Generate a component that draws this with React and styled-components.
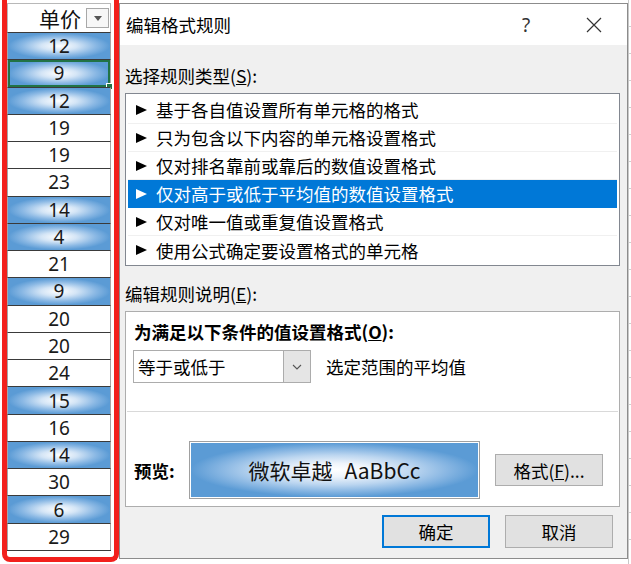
import React from 'react';
import styled, { createGlobalStyle } from 'styled-components';

const GlobalStyle = createGlobalStyle`
  html, body {
    margin: 0;
    padding: 0;
    background: #fff;
  }
  body {
    font-family: "Noto Sans CJK SC", "Noto Sans", sans-serif;
  }
`;

const Page = styled.div`
  display: flex;
  align-items: flex-start;
  width: 631px;
  height: 564px;
  overflow: hidden;
  background: #fff;
`;

const SheetSide = styled.div`
  flex: none;
  width: 119px;
  height: 564px;
  padding-left: 2px;
  box-sizing: border-box;
`;

const RedFrame = styled.div`
  height: 562px;
  border: 5px solid #f2201c;
  border-top: none;
  border-radius: 0 0 8px 8px;
  padding: 3px 3px 0 0;
  box-sizing: border-box;
  display: flex;
  flex-direction: column;
`;

const HeaderCell = styled.div`
  height: 29px;
  display: flex;
  align-items: center;
  justify-content: flex-end;
  gap: 5px;
  padding-right: 1px;
  border: 1px solid #b8b8b8;
  border-bottom: none;
  box-sizing: border-box;
  font-size: 21px;
  color: #111;
`;

const FilterButton = styled.span`
  width: 23px;
  height: 20px;
  border: 1px solid #a8a8a8;
  background: #f7f7f7;
  box-sizing: border-box;
  display: flex;
  align-items: center;
  justify-content: center;

  &::after {
    content: '';
    border-top: 5px solid #555;
    border-left: 4px solid transparent;
    border-right: 4px solid transparent;
  }
`;

const Rows = styled.div`
  height: 518px;
  display: grid;
  grid-template-rows: repeat(19, 1fr);
  border-bottom: 1px solid #3a3a3a;
`;

const Cell = styled.div`
  position: relative;
  display: flex;
  align-items: center;
  justify-content: center;
  border-top: 1px solid #3a3a3a;
  border-left: 1px solid #a6a6a6;
  border-right: 1px solid #a6a6a6;
  font-family: "Noto Sans", sans-serif;
  font-size: 19px;
  color: #1a1a1a;
  background: ${p =>
    p.$low
      ? 'radial-gradient(ellipse farthest-side at 50% 50%, #ffffff 0%, #d4e5f6 35%, #8ab8e4 72%, #5b9bd5 100%)'
      : '#fff'};
  box-shadow: ${p => (p.$selected ? 'inset 0 0 0 2px #217346' : 'none')};
`;

const FillHandle = styled.span`
  position: absolute;
  right: -3px;
  bottom: -3px;
  width: 5px;
  height: 5px;
  background: #217346;
  border: 1px solid #fff;
`;

const Dialog = styled.div`
  flex: none;
  width: 509px;
  height: 556px;
  margin-top: 3px;
  background: #f0f0f0;
  border: 1px solid #8c8c8c;
  box-sizing: border-box;
  display: flex;
  flex-direction: column;
  font-size: 17.5px;
  color: #000;
`;

const TitleBar = styled.div`
  height: 41px;
  flex: none;
  background: #fff;
  display: flex;
  align-items: center;
  padding: 0 10px 0 6px;
`;

const TitleText = styled.span`
  flex: 1;
`;

const CaptionButton = styled.span`
  width: 46px;
  height: 41px;
  display: flex;
  align-items: center;
  justify-content: center;
  margin-right: ${p => p.$gap || 0}px;
  font-family: "Noto Sans", sans-serif;
  font-size: 19px;
  color: #333;
`;

const Body = styled.div`
  flex: 1;
  display: flex;
  flex-direction: column;
  padding: 0 7px 0 5px;
`;

const SectionLabel = styled.div`
  line-height: 24px;
  margin-top: ${p => p.$top}px;
  margin-bottom: 5px;
`;

const RuleList = styled.div`
  height: 173px;
  border: 1px solid #828790;
  background: #fff;
  padding: 2px;
  box-sizing: border-box;
  display: flex;
  flex-direction: column;
`;

const RuleItem = styled.div`
  height: 28px;
  flex: none;
  display: flex;
  align-items: center;
  gap: 9px;
  padding-left: 8px;
  box-sizing: border-box;
  border-bottom: 1px solid ${p => (p.$active ? '#0078d7' : '#f0f0f0')};
  background: ${p => (p.$active ? '#0078d7' : 'transparent')};
  color: ${p => (p.$active ? '#fff' : '#000')};

  &:last-child {
    border-bottom: none;
  }
`;

const Arrow = styled.span`
  width: 0;
  height: 0;
  border-left: 11px solid currentColor;
  border-top: 5.5px solid transparent;
  border-bottom: 5.5px solid transparent;
`;

const Panel = styled.div`
  height: 196px;
  border: 1px solid #adadad;
  background: #fff;
  box-sizing: border-box;
  display: flex;
  flex-direction: column;
`;

const CondLabel = styled.div`
  font-weight: bold;
  line-height: 24px;
  padding: 8px 0 0 8px;
`;

const SelectRow = styled.div`
  display: flex;
  align-items: center;
  gap: 15px;
  margin: 6px 0 0 7px;
`;

const Select = styled.div`
  width: 178px;
  height: 33px;
  border: 1px solid #acacac;
  box-sizing: border-box;
  display: flex;
  align-items: stretch;
`;

const SelectValue = styled.span`
  flex: 1;
  display: flex;
  align-items: center;
  padding-left: 4px;
`;

const SelectButton = styled.span`
  width: 26px;
  background: #e5e5e5;
  border-left: 1px solid #acacac;
  display: flex;
  align-items: center;
  justify-content: center;
`;

const Separator = styled.div`
  height: 1px;
  background: #d9d9d9;
  margin: 28px 1px 0;
`;

const PreviewRow = styled.div`
  display: flex;
  align-items: center;
  margin: 29px 0 0 8px;
`;

const PreviewLabel = styled.span`
  font-weight: bold;
  width: 55px;
`;

const PreviewBox = styled.div`
  width: 291px;
  height: 58px;
  border: 1px solid #a0a0a0;
  padding: 1px;
  box-sizing: border-box;
  background: #fff;
`;

const PreviewFill = styled.div`
  height: 100%;
  display: flex;
  align-items: center;
  justify-content: center;
  gap: 12px;
  font-size: 21px;
  color: #111;
  background: radial-gradient(ellipse farthest-side at 50% 50%, #ffffff 0%, #eef4fb 25%, #bcd6f0 55%, #86b5e2 80%, #5b9bd5 100%);
`;

const Button = styled.span`
  width: 108px;
  height: ${p => p.$h || 33}px;
  box-sizing: border-box;
  display: flex;
  align-items: center;
  justify-content: center;
  background: #e1e1e1;
  border: 1px solid ${p => (p.$primary ? '#0078d7' : '#adadad')};
  box-shadow: ${p => (p.$primary ? 'inset 0 0 0 1px #0078d7' : 'none')};
  margin-left: ${p => p.$ml || 0}px;
`;

const Footer = styled.div`
  display: flex;
  justify-content: flex-end;
  gap: 15px;
  margin-top: 8px;
  padding-right: 7px;
`;

const RightStrip = styled.div`
  flex: 1;
  height: 564px;
  border-left: 1px solid #c8c8c8;
  background: repeating-linear-gradient(to bottom, #fff 0, #fff 26px, #cfcfcf 26px, #cfcfcf 27px);
`;

const values = [12, 9, 12, 19, 19, 23, 14, 4, 21, 9, 20, 20, 24, 15, 16, 14, 30, 6, 29];

const rules = [
  '基于各自值设置所有单元格的格式',
  '只为包含以下内容的单元格设置格式',
  '仅对排名靠前或靠后的数值设置格式',
  '仅对高于或低于平均值的数值设置格式',
  '仅对唯一值或重复值设置格式',
  '使用公式确定要设置格式的单元格',
];

export default function App() {
  return (
    <>
      <GlobalStyle />
      <Page>
        <SheetSide>
          <RedFrame>
            <HeaderCell>
              单价
              <FilterButton />
            </HeaderCell>
            <Rows>
              {values.map((v, i) => (
                <Cell key={i} $low={v <= 15} $selected={i === 1}>
                  {v}
                  {i === 1 && <FillHandle />}
                </Cell>
              ))}
            </Rows>
          </RedFrame>
        </SheetSide>

        <Dialog>
          <TitleBar>
            <TitleText>编辑格式规则</TitleText>
            <CaptionButton $gap={22}>?</CaptionButton>
            <CaptionButton>
              <svg width="16" height="16" viewBox="0 0 16 16">
                <path d="M1 1 L15 15 M15 1 L1 15" stroke="#333" strokeWidth="1.2" fill="none" />
              </svg>
            </CaptionButton>
          </TitleBar>
          <Body>
            <SectionLabel $top={19}>
              选择规则类型(<u>S</u>):
            </SectionLabel>
            <RuleList>
              {rules.map((r, i) => (
                <RuleItem key={r} $active={i === 3}>
                  <Arrow />
                  {r}
                </RuleItem>
              ))}
            </RuleList>

            <SectionLabel $top={16}>
              编辑规则说明(<u>E</u>):
            </SectionLabel>
            <Panel>
              <CondLabel>
                为满足以下条件的值设置格式(<u>O</u>):
              </CondLabel>
              <SelectRow>
                <Select>
                  <SelectValue>等于或低于</SelectValue>
                  <SelectButton>
                    <svg width="10" height="6" viewBox="0 0 10 6">
                      <polyline points="1,1 5,5 9,1" stroke="#555" strokeWidth="1.1" fill="none" />
                    </svg>
                  </SelectButton>
                </Select>
                选定范围的平均值
              </SelectRow>
              <Separator />
              <PreviewRow>
                <PreviewLabel>预览:</PreviewLabel>
                <PreviewBox>
                  <PreviewFill>
                    <span>微软卓越</span>
                    <span>AaBbCc</span>
                  </PreviewFill>
                </PreviewBox>
                <Button $h={32} $ml={15}>
                  格式(<u>F</u>)...
                </Button>
              </PreviewRow>
            </Panel>
            <Footer>
              <Button $primary>确定</Button>
              <Button>取消</Button>
            </Footer>
          </Body>
        </Dialog>
        <RightStrip />
      </Page>
    </>
  );
}
